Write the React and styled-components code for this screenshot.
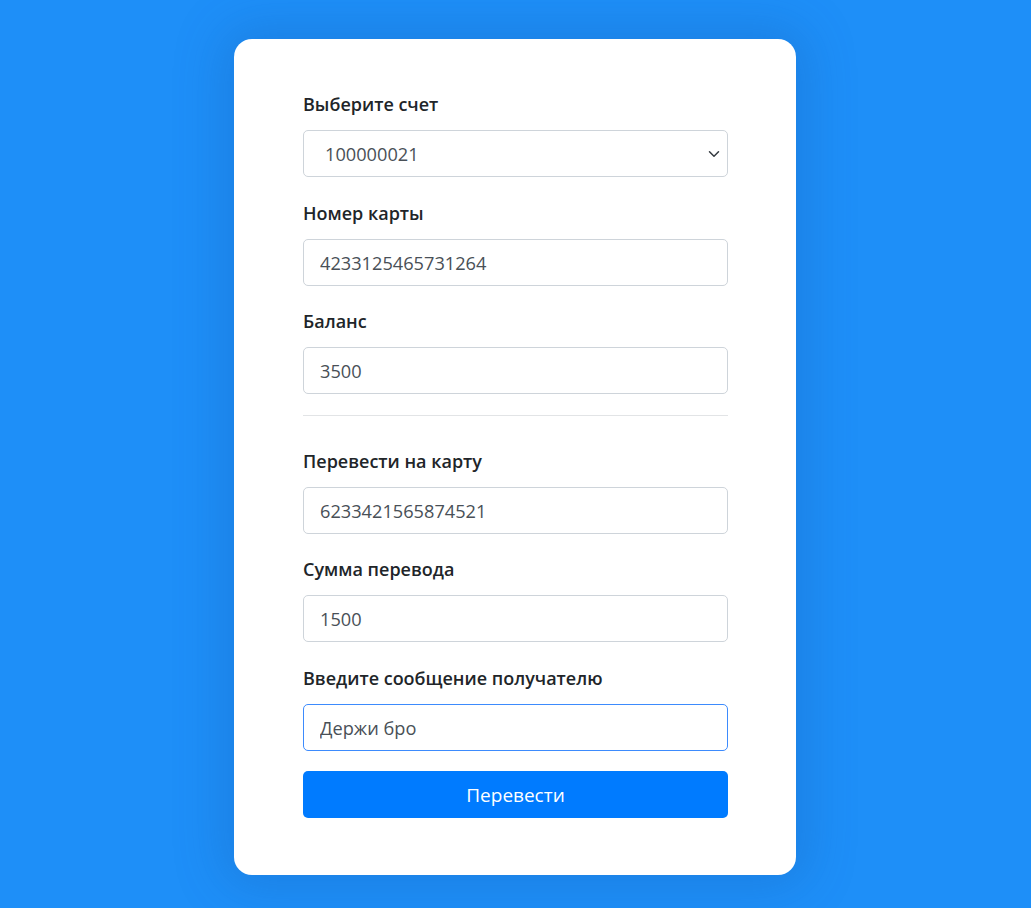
import styled, { createGlobalStyle } from "styled-components";

const GlobalStyle = createGlobalStyle`
  html, body {
    margin: 0;
    padding: 0;
    background: #1e8ff8;
  }
  * {
    box-sizing: border-box;
  }
`;

const Page = styled.div`
  min-height: 100vh;
  display: flex;
  justify-content: center;
  align-items: flex-start;
  padding: 39px 1px 0 0;
  font-family: "Open Sans", "Noto Sans", sans-serif;
`;

const Card = styled.form`
  width: 562px;
  background: #fff;
  border-radius: 18px;
  padding: 52px 68px 57px 69px;
  box-shadow: 0 0 50px 10px rgba(20, 80, 160, 0.25);
  display: flex;
  flex-direction: column;
`;

const Group = styled.div`
  display: flex;
  flex-direction: column;
  margin-bottom: ${(p) => p.$mb ?? 22}px;
`;

const Label = styled.label`
  font-size: 18px;
  line-height: 27px;
  font-weight: 600;
  color: #212529;
  margin-bottom: 12px;
`;

const Input = styled.input`
  height: 47px;
  width: 100%;
  padding: 0 16px;
  font-family: inherit;
  font-size: 18.2px;
  color: #495057;
  background: #fff;
  border: 1px solid ${(p) => (p.$focused ? "#3d8bfd" : "#ced4da")};
  border-radius: 5px;
  outline: none;
`;

const SelectWrap = styled.div`
  position: relative;
`;

const Select = styled.select`
  appearance: none;
  height: 47px;
  width: 100%;
  padding: 0 40px 0 21px;
  font-family: inherit;
  font-size: 18.2px;
  color: #495057;
  background: #fff;
  border: 1px solid #ced4da;
  border-radius: 5px;
  outline: none;
`;

const Chevron = styled.svg`
  position: absolute;
  right: 7px;
  top: 18px;
  pointer-events: none;
`;

const Divider = styled.hr`
  border: 0;
  border-top: 1px solid #e2e4e6;
  margin: 0 0 32px;
`;

const Button = styled.button`
  height: 47px;
  width: 100%;
  border: 0;
  border-radius: 5px;
  background: #007bff;
  color: #fff;
  font-family: inherit;
  font-size: 19px;
  cursor: pointer;
`;

const App = () => {
  return (
    <>
      <GlobalStyle />
      <Page>
        <Card onSubmit={(e) => e.preventDefault()}>
          <Group $mb={23}>
            <Label>Выберите счет</Label>
            <SelectWrap>
              <Select defaultValue="100000021">
                <option value="100000021">100000021</option>
              </Select>
              <Chevron width="14" height="12" viewBox="0 0 16 16">
                <path
                  d="M2 5l6 6 6-6"
                  fill="none"
                  stroke="#343a40"
                  strokeWidth="2"
                  strokeLinecap="round"
                  strokeLinejoin="round"
                />
              </Chevron>
            </SelectWrap>
          </Group>
          <Group $mb={22}>
            <Label>Номер карты</Label>
            <Input defaultValue="4233125465731264" readOnly />
          </Group>
          <Group $mb={21}>
            <Label>Баланс</Label>
            <Input defaultValue="3500" readOnly />
          </Group>
          <Divider />
          <Group $mb={22}>
            <Label>Перевести на карту</Label>
            <Input defaultValue="6233421565874521" />
          </Group>
          <Group $mb={23}>
            <Label>Сумма перевода</Label>
            <Input defaultValue="1500" />
          </Group>
          <Group $mb={20}>
            <Label>Введите сообщение получателю</Label>
            <Input defaultValue="Держи бро" $focused />
          </Group>
          <Button type="submit">Перевести</Button>
        </Card>
      </Page>
    </>
  );
};

export default App;
